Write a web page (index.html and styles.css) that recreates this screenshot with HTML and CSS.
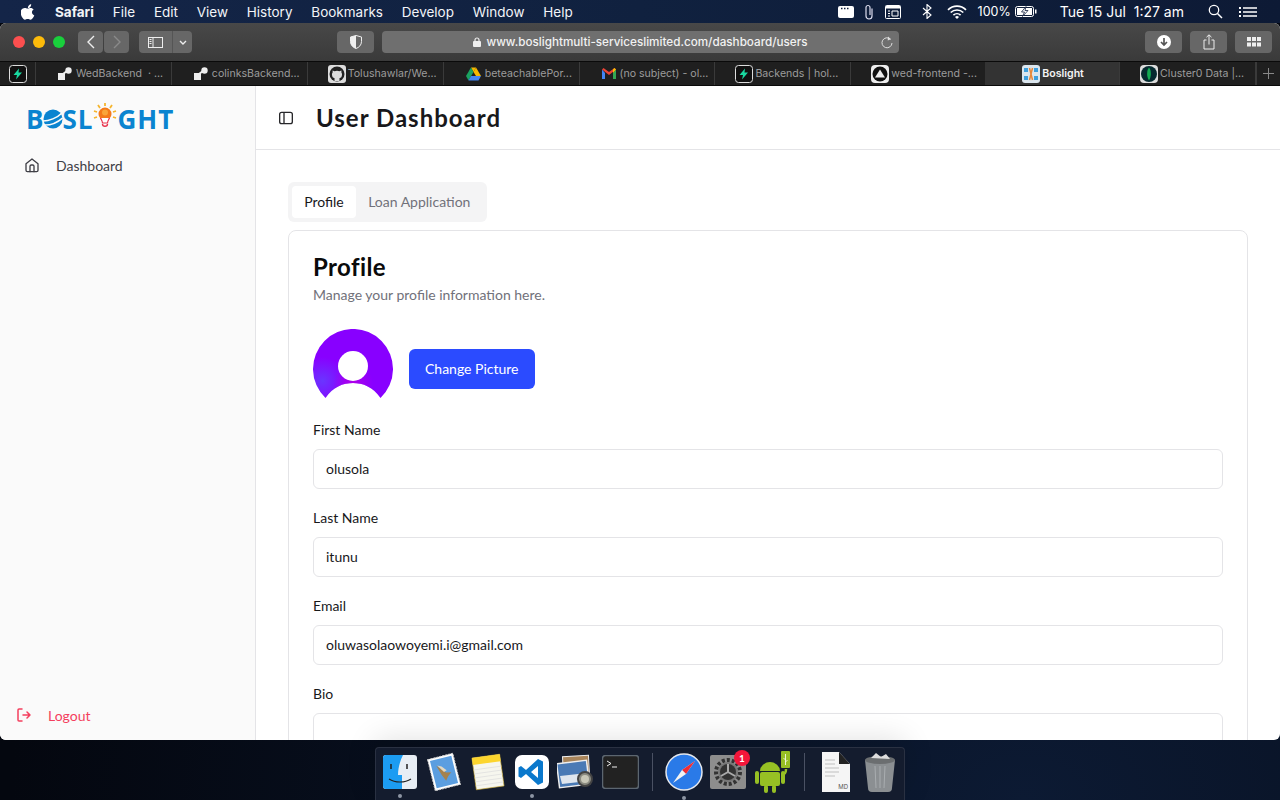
FILE: index.html
```html
<!DOCTYPE html>
<html>
<head>
  <title>Boslight</title>
  <link rel="stylesheet" href="styles.css">
</head>
<body>

  <div class="menubar">
    <div class="menu-left">
      <svg class="apple" width="14" height="16" viewBox="0 0 14 16"><path fill="#fff" d="M10.2 0.3c.1 1-.3 1.9-.9 2.6-.6.7-1.5 1.2-2.4 1.1-.1-.9.3-1.9.9-2.5C8.4.8 9.4.3 10.2.3zM13.3 11.4c-.4.9-.6 1.3-1.1 2-.7 1-1.6 2.3-2.8 2.3-1 0-1.3-.7-2.7-.7s-1.700.7-2.700.7c-1.200 0-2-1.100-2.700-2.100C-.6 10.800-.8 7.500.4 5.800c.8-1.200 2.100-1.900 3.300-1.900 1.200 0 2 .7 3 .7s1.600-.7 3-.7c1.100 0 2.200.6 3 1.600-2.600 1.500-2.200 5 .6 5.900z"/></svg>
      <span class="menu-item app-name">Safari</span>
      <span class="menu-item">File</span>
      <span class="menu-item">Edit</span>
      <span class="menu-item">View</span>
      <span class="menu-item">History</span>
      <span class="menu-item">Bookmarks</span>
      <span class="menu-item">Develop</span>
      <span class="menu-item">Window</span>
      <span class="menu-item">Help</span>
    </div>
    <div class="menu-right">
      <svg class="st-dots" width="16" height="12" viewBox="0 0 16 12"><rect width="16" height="12" rx="2" fill="#fff"/><path d="M3 2.500h1.500M6 2.500h1.500M9 2.500h1.500" stroke="#12203f" stroke-width="1.500"/></svg>
      <svg class="st-clip" width="10" height="16" viewBox="0 0 10 16"><path d="M8 4.500v7.500a3 3 0 0 1-6 0V3.500a2 2 0 0 1 4 0V11" fill="none" stroke="#dde" stroke-width="1.200"/></svg>
      <svg class="st-kb" width="16" height="14" viewBox="0 0 16 14"><rect x=".5" y=".5" width="15" height="13" rx="1" fill="none" stroke="#fff"/><rect x="1" y="1" width="14" height="2.500" fill="#fff"/><path d="M3 6h2M3 8.500h2M3 11h2M7 6h6v5H7z" stroke="#fff" fill="none"/></svg>
      <svg class="st-bt" width="10" height="15" viewBox="0 0 10 15"><path d="M1 4l8 7-4 3.500V.5L9 4l-8 7" fill="none" stroke="#fff" stroke-width="1.100"/></svg>
      <svg class="st-wifi" width="20" height="14" viewBox="0 0 20 14"><path d="M1 4.800a13 13 0 0 1 18 0M3.700 7.500a9.200 9.200 0 0 1 12.600 0M6.400 10.200a5.200 5.200 0 0 1 7.200 0" fill="none" stroke="#fff" stroke-width="1.700"/><path d="M10 14l-2-2a3 3 0 0 1 4 0z" fill="#fff"/></svg>
      <span class="st-pct">100%</span>
      <svg class="st-batt" width="22" height="11" viewBox="0 0 22 11"><rect x=".5" y=".5" width="18" height="10" rx="2" fill="none" stroke="#fff"/><rect x="20" y="3.500" width="1.500" height="4" fill="#fff"/><rect x="2" y="2" width="15" height="7" fill="#fff"/><path d="M11 0.500L6.500 6H9.500L7.500 10.500L13 4.500H10z" fill="#fff" stroke="#12203f" stroke-width=".8"/></svg>
      <span class="st-clock">Tue 15 Jul&nbsp; 1:27 am</span>
      <svg class="st-search" width="15" height="15" viewBox="0 0 15 15"><circle cx="6" cy="6" r="4.700" fill="none" stroke="#fff" stroke-width="1.300"/><path d="M9.500 9.500L14 14" stroke="#fff" stroke-width="1.500"/></svg>
      <svg class="st-list" width="18" height="10" viewBox="0 0 18 10"><path d="M4 1h14M4 5h14M4 9h14" stroke="#fff" stroke-width="1.400"/><path d="M0 1h2M0 5h2M0 9h2" stroke="#fff" stroke-width="1.800"/></svg>
    </div>
  </div>

  <div class="desktop">
    <div class="window">

      <div class="toolbar">
        <div class="lights">
          <span class="light red"></span>
          <span class="light yellow"></span>
          <span class="light green"></span>
        </div>
        <div class="nav-group">
          <div class="tool-btn nav-btn"><svg width="8" height="14" viewBox="0 0 8 14"><path d="M7 1L1 7l6 6" fill="none" stroke="#eee" stroke-width="1.400"/></svg></div>
          <div class="tool-btn nav-btn"><svg width="8" height="14" viewBox="0 0 8 14"><path d="M1 1l6 6-6 6" fill="none" stroke="#8a8a8a" stroke-width="1.400"/></svg></div>
        </div>
        <div class="tool-btn side-btn">
          <span class="side-main"><svg width="15" height="11" viewBox="0 0 15 11"><rect x=".5" y=".5" width="14" height="10" fill="none" stroke="#eee"/><path d="M5 .5v10M1.500 2.500h2M1.500 4.500h2M1.500 6.500h2" stroke="#eee"/></svg></span>
          <span class="side-arrow"><svg width="8" height="5" viewBox="0 0 8 5"><path d="M1 1l3 3 3-3" fill="none" stroke="#eee" stroke-width="1.400"/></svg></span>
        </div>
        <div class="tool-btn shield-btn"><svg width="12" height="14" viewBox="0 0 12 14"><path d="M6 .5l5.500 1.500v4.500c0 3.500-2.500 6-5.500 7-3-1-5.500-3.500-5.500-7V2z" fill="none" stroke="#eee"/><path d="M6 .5L.5 2v4.500c0 3.500 2.500 6 5.500 7z" fill="#eee"/></svg></div>
        <div class="address">
          <svg class="lock" width="8" height="10" viewBox="0 0 8 10"><rect y="4" width="8" height="6" rx="1" fill="#eee"/><path d="M2 4.500V3a2 2 0 0 1 4 0v1.500" fill="none" stroke="#eee" stroke-width="1.200"/></svg>
          <span>www.boslightmulti-serviceslimited.com/dashboard/users</span>
          <svg class="reload" width="12" height="13" viewBox="0 0 12 13"><path d="M9.500 3.200A5 5 0 1 0 11 7" fill="none" stroke="#ddd" stroke-width="1"/><path d="M7 0.500l3 2.700-3.300 1.300z" fill="#ddd"/></svg>
        </div>
        <div class="tool-right">
          <div class="tool-btn small-btn"><svg width="14" height="14" viewBox="0 0 14 14"><circle cx="7" cy="7" r="7" fill="#fff"/><path d="M7 3v6M4 7l3 3 3-3" fill="none" stroke="#555" stroke-width="1.700"/></svg></div>
          <div class="tool-btn small-btn"><svg width="12" height="16" viewBox="0 0 12 16"><path d="M3.500 6H1v9h10V6H8.500" fill="none" stroke="#eee"/><path d="M6 10.500V1M3.500 3.200L6 .8l2.500 2.400" fill="none" stroke="#eee"/></svg></div>
          <div class="tool-btn small-btn"><svg width="14" height="10" viewBox="0 0 14 10"><path fill="#eee" d="M0 0h4v4H0zM5 0h4v4H5zM10 0h4v4h-4zM0 5.500h4v4H0zM5 5.500h4v4H5zM10 5.500h4v4h-4z"/></svg></div>
        </div>
      </div>

      <div class="tabbar">
        <div class="tab pin">
          <svg class="fav" width="18" height="18" viewBox="0 0 18 18"><rect x=".5" y=".5" width="17" height="17" rx="3" fill="#111" stroke="#ddd"/><path d="M10 3.500L4.500 10H8l-1 4.500 6-7H9.500z" fill="#19d9a0"/></svg>
        </div>
        <div class="tab small-fav">
          <svg class="fav-node" width="14" height="14" viewBox="0 0 14 14"><rect y="6" width="7" height="7" fill="#eee"/><circle cx="10.500" cy="3.500" r="3.200" fill="#eee"/><path d="M5 7l4-3" stroke="#eee" stroke-width="2"/></svg>
          <span class="tab-text">WedBackend &nbsp;· ...</span>
        </div>
        <div class="tab small-fav">
          <svg class="fav-node" width="14" height="14" viewBox="0 0 14 14"><rect y="6" width="7" height="7" fill="#eee"/><circle cx="10.500" cy="3.500" r="3.200" fill="#eee"/><path d="M5 7l4-3" stroke="#eee" stroke-width="2"/></svg>
          <span class="tab-text">colinksBackend...</span>
        </div>
        <div class="tab">
          <svg class="fav" width="18" height="18" viewBox="0 0 18 18"><rect width="18" height="18" rx="3" fill="#ddd"/><circle cx="9" cy="9" r="7.500" fill="#222"/><path d="M6.500 16v-3c-1.500 0-2.500-1-2.500-3.500 0-1 .3-1.500.6-2V5.500l1.900.8a6 6 0 0 1 5 0l1.900-.8v2c.3.500.6 1 .6 2 0 2.500-1 3.500-2.500 3.500v3z" fill="#ddd"/></svg>
          <span class="tab-text">Tolushawlar/We...</span>
        </div>
        <div class="tab small-fav">
          <svg class="fav" width="15" height="14" viewBox="0 0 15 14"><path d="M5 .5h5L7.500 5 5 .5z" fill="#f5b800"/><path d="M5 .5L0 9l2.500 4.500L7.500 5z" fill="#1aa260"/><path d="M10 .5L15 9H10L7.500 5z" fill="#f5b800"/><path d="M2.500 13.500h10L15 9H5z" fill="#4285f4"/></svg>
          <span class="tab-text">beteachablePor...</span>
        </div>
        <div class="tab small-fav">
          <svg class="fav" width="14" height="11" viewBox="0 0 14 11"><path d="M0 1.500V11h3V5z" fill="#4285f4"/><path d="M14 1.500V11h-3V5z" fill="#34a853"/><path d="M0 1.500L7 7l7-5.500L12.500 0 7 4 1.500 0z" fill="#ea4335"/><path d="M11 5l3-3.500L12.500 0 11 1.200z" fill="#fbbc04"/></svg>
          <span class="tab-text">(no subject) - ol...</span>
        </div>
        <div class="tab">
          <svg class="fav" width="18" height="18" viewBox="0 0 18 18"><rect x=".5" y=".5" width="17" height="17" rx="3" fill="#111" stroke="#ddd"/><path d="M10 3.500L4.500 10H8l-1 4.500 6-7H9.500z" fill="#19d9a0"/></svg>
          <span class="tab-text">Backends | hol...</span>
        </div>
        <div class="tab">
          <svg class="fav" width="18" height="18" viewBox="0 0 18 18"><rect width="18" height="18" rx="4" fill="#eee"/><circle cx="9" cy="9" r="7.500" fill="#111"/><path d="M9 4.500l5 8H4z" fill="#eee"/></svg>
          <span class="tab-text">wed-frontend -...</span>
        </div>
        <div class="tab active">
          <svg class="fav" width="18" height="18" viewBox="0 0 18 18"><rect width="18" height="18" rx="3" fill="#dbe6ee"/><path d="M2 3h4v4H2zM12 3h4v4h-4zM2 11h4v4H2zM12 11h4v4h-4z" fill="#3f9fdd"/><path d="M7.500 3l3 12M10.500 3l-3 12" stroke="#e8883a" stroke-width="1.500"/></svg>
          <span class="tab-text">Boslight</span>
        </div>
        <div class="tab">
          <svg class="fav" width="18" height="18" viewBox="0 0 18 18"><rect width="18" height="18" rx="4" fill="#ddd"/><circle cx="9" cy="9" r="8" fill="#062a30"/><path d="M9 2.500c2.500 2.500 2.500 9.500 0 13-2.500-3.500-2.500-10.500 0-13z" fill="#13aa52"/></svg>
          <span class="tab-text">Cluster0 Data |...</span>
        </div>
        <div class="tab add-tab"><svg width="11" height="11" viewBox="0 0 11 11"><path d="M5.500 0v11M0 5.500h11" stroke="#888"/></svg></div>
      </div>

      <div class="app">
        <aside class="sidebar">
          <div class="logo">
            <span>B</span>
            <svg class="logo-globe" width="20" height="20" viewBox="0 0 20 20"><circle cx="10" cy="10" r="9.500" fill="#0a84d0"/><path d="M0 12c6 0 14-3 19-8M2 16c6 0 13-3 17.500-7" fill="none" stroke="#fafafa" stroke-width="1.600"/></svg>
            <span>SL</span>
            <svg class="logo-bulb" width="24" height="26" viewBox="0 0 24 26"><path d="M12 0v3M5 2l2 3M19 2l-2 3M1 8l3 1M23 8l-3 1M1 15l3-1M23 15l-3-1" stroke="#f5b52e" stroke-width="1.800"/><circle cx="12" cy="11" r="6.500" fill="#f47a1a"/><circle cx="12" cy="9.500" r="3" fill="#f9a53a"/><path d="M7.500 15c1 2 2 3 2 5h5c0-2 1-3 2-5" fill="#fff" stroke="#e8304a" stroke-width="1.200"/><path d="M9.500 21c0 3 5 3 5 0" fill="none" stroke="#e8304a" stroke-width="1.400"/></svg>
            <span>GHT</span>
          </div>
          <nav class="side-nav">
            <a class="side-link">
              <svg width="16" height="16" viewBox="0 0 24 24" fill="none" stroke="#3f3f46" stroke-width="2" stroke-linecap="round" stroke-linejoin="round"><path d="M3 10l9-7 9 7v10a2 2 0 0 1-2 2H5a2 2 0 0 1-2-2z"/><path d="M9 22v-8a2 2 0 0 1 2-2h2a2 2 0 0 1 2 2v8"/></svg>
              <span>Dashboard</span>
            </a>
          </nav>
          <a class="logout">
            <svg width="16" height="16" viewBox="0 0 16 16" fill="none" stroke="#f43f5e" stroke-width="1.500" stroke-linecap="round" stroke-linejoin="round"><path d="M6 2H3a1 1 0 0 0-1 1v10a1 1 0 0 0 1 1h3M7 8h7M11 5l3 3-3 3"/></svg>
            <span>Logout</span>
          </a>
        </aside>

        <main class="main">
          <header class="topbar">
            <svg width="16" height="16" viewBox="0 0 24 24" fill="none" stroke="#27272a" stroke-width="2"><rect x="2.500" y="3.500" width="19" height="17" rx="3"/><path d="M9 3.500v17"/></svg>
            <h1>User Dashboard</h1>
          </header>

          <div class="content">
            <div class="tabs-list">
              <button class="tab-trigger selected">Profile</button>
              <button class="tab-trigger">Loan Application</button>
            </div>

            <section class="card">
              <h2>Profile</h2>
              <p class="subtitle">Manage your profile information here.</p>

              <div class="avatar-row">
                <svg class="avatar" width="80" height="80" viewBox="0 0 80 80">
                  <defs>
                    <clipPath id="round"><path d="M12.500 69A40 40 0 1 1 67.500 69C60 58 50 54 40 54S20 58 12.500 69z"/></clipPath>
                    <radialGradient id="glow" cx="0.12" cy="0.65" r="0.3"><stop offset="0" stop-color="#6a35ff"/><stop offset="1" stop-color="#8800ff"/></radialGradient>
                    <radialGradient id="pink" cx="0.5" cy="0.68" r="0.25"><stop offset="0" stop-color="#b000e8"/><stop offset="1" stop-color="#b000e8" stop-opacity="0"/></radialGradient>
                  </defs>
                  <g clip-path="url(#round)">
                    <rect width="80" height="80" fill="url(#glow)"/>
                    <rect width="80" height="80" fill="url(#pink)"/>
                    <circle cx="40" cy="37" r="15" fill="#fff"/>
                  </g>
                </svg>
                <button class="change-btn">Change Picture</button>
              </div>

              <div class="field">
                <label>First Name</label>
                <input type="text" value="olusola">
              </div>
              <div class="field">
                <label>Last Name</label>
                <input type="text" value="itunu">
              </div>
              <div class="field">
                <label>Email</label>
                <input type="text" value="oluwasolaowoyemi.i@gmail.com">
              </div>
              <div class="field">
                <label>Bio</label>
                <textarea rows="4"></textarea>
              </div>
            </section>
          </div>
        </main>
      </div>
    </div>

    <div class="dock">
      <div class="dock-item running">
        <svg width="34" height="34" viewBox="0 0 34 34"><rect width="34" height="34" rx="3" fill="#e8eef5"/><path d="M0 3a3 3 0 0 1 3-3h17c-3 6-5 13-5 20h4v14H3a3 3 0 0 1-3-3z" fill="#1c9cf2"/><path d="M8 9v5M24 9v5" stroke="#222" stroke-width="1.500"/><path d="M6 24c6 4 16 4 22 0" fill="none" stroke="#222" stroke-width="1.200"/></svg>
      </div>
      <div class="dock-item">
        <svg width="34" height="40" viewBox="0 0 34 40"><g transform="rotate(-14 17 20)"><rect x="4" y="4" width="26" height="32" fill="#fff" stroke="#ccc" stroke-dasharray="2 1"/><rect x="6" y="6" width="22" height="28" fill="#5b9ee0"/><path d="M11 12l8 9 5 1-4 3-3 4-3-7z" fill="#a5824f"/><path d="M12 12l4 2 4 5-3 1z" fill="#e3d8c0"/></g></svg>
      </div>
      <div class="dock-item">
        <svg width="34" height="40" viewBox="0 0 34 40"><g transform="rotate(-8 17 20)"><rect x="3" y="4" width="28" height="32" fill="#f6f6ee" stroke="#c9a82a" stroke-width=".6"/><rect x="3" y="4" width="28" height="7" fill="#fcd52e"/><path d="M3 16h28M3 20h28M3 24h28M3 28h28M3 32h28" stroke="#ddd" stroke-width=".7"/></g></svg>
      </div>
      <div class="dock-item running">
        <svg width="34" height="34" viewBox="0 0 34 34"><rect width="34" height="34" rx="7" fill="#fff"/><path d="M23 4l5 2.500v21L23 30 11 19l-5 4-2.500-1.500v-9L6 11l5 4zM23 11l-7 6 7 6z" fill="#0a78cc"/></svg>
      </div>
      <div class="dock-item">
        <svg width="38" height="36" viewBox="0 0 38 36"><rect x="6" y="2" width="26" height="20" fill="#a8845a" stroke="#eee" transform="rotate(-3 19 12)"/><rect x="1" y="8" width="30" height="24" fill="#4a7ab5" stroke="#eee" stroke-width="1.500" transform="rotate(-7 16 20)"/><path d="M3 22l27-3 1 8-26 3z" fill="#dfe6ee"/><circle cx="28" cy="25" r="7" fill="#8b8b80" stroke="#444" stroke-width="2"/><circle cx="28" cy="25" r="4" fill="#c9c8b8"/></svg>
      </div>
      <div class="dock-item">
        <svg width="37" height="34" viewBox="0 0 37 34"><rect x=".5" y=".5" width="36" height="33" rx="3" fill="#222" stroke="#5c6670" stroke-width="1.500"/><path d="M5 6l4 2.500-4 2.500" fill="none" stroke="#eee" stroke-width="1"/><path d="M10 12h5" stroke="#eee"/></svg>
      </div>
      <span class="dock-sep"></span>
      <div class="dock-item running">
        <svg width="38" height="38" viewBox="0 0 38 38"><circle cx="19" cy="19" r="18" fill="#2a7ae8" stroke="#e5e8ee" stroke-width="1.500"/><path d="M30 8L17 17l4 4z" fill="#f2f2f2"/><path d="M30 8L21 21l-4-4z" fill="#ee2c36"/><path d="M8 30l9-13 4 4z" fill="#f2f2f2"/></svg>
      </div>
      <div class="dock-item">
        <svg width="36" height="34" viewBox="0 0 36 34"><rect width="36" height="34" rx="2" fill="#8d8d8d"/><circle cx="18" cy="17" r="12" fill="none" stroke="#333" stroke-width="4" stroke-dasharray="3 2"/><circle cx="18" cy="17" r="10" fill="#777"/><circle cx="18" cy="17" r="8" fill="#333"/><path d="M18 17V9M18 17l7 4M18 17l-7 4" stroke="#aaa" stroke-width="2"/></svg>
        <span class="badge">1</span>
      </div>
      <div class="dock-item">
        <svg width="36" height="42" viewBox="0 0 36 42"><path d="M6 20a10 9 0 0 1 20 0z" fill="#97c024"/><rect x="6" y="21" width="20" height="14" rx="2" fill="#97c024"/><rect x="1" y="20" width="4" height="13" rx="2" fill="#97c024"/><rect x="27" y="20" width="4" height="13" rx="2" fill="#97c024"/><rect x="10" y="34" width="4" height="8" rx="2" fill="#97c024"/><rect x="18" y="34" width="4" height="8" rx="2" fill="#97c024"/><path d="M27 24c4 0 5-2 5-6" fill="none" stroke="#97c024" stroke-width="2.500"/><rect x="27" y="0" width="9" height="17" rx="1" fill="#97c024"/><path d="M31.500 3v11M29.500 7l2 2M33.500 9l-2 2" stroke="#fff" stroke-width=".8"/></svg>
      </div>
      <span class="dock-sep"></span>
      <div class="dock-item">
        <svg width="28" height="40" viewBox="0 0 28 40"><path d="M0 0h17l11 12v28H0z" fill="#f5f5f5"/><path d="M17 0l11 12H17z" fill="#222"/><path d="M3 8h10M3 12h10M3 16h14M3 20h14M3 24h10" stroke="#aaa" stroke-width=".7"/></svg>
        <span class="md-label">MD</span>
      </div>
      <div class="dock-item">
        <svg width="32" height="40" viewBox="0 0 32 40"><path d="M1 8h30l-3 28a4 4 0 0 1-4 4H8a4 4 0 0 1-4-4z" fill="#8b8f92"/><ellipse cx="16" cy="8" rx="15" ry="4" fill="#6b6e70"/><path d="M7 6l5-5 5 4 5-3 4 5z" fill="#ddd"/><path d="M11 14l1 22M16 14v22M21 14l-1 22" stroke="#a9adb0"/></svg>
      </div>
    </div>
  </div>

</body>
</html>
```

FILE: styles.css
```css
* {
  box-sizing: border-box;
}

html, body {
  margin: 0;
  height: 800px;
  overflow: hidden;
}

body {
  display: flex;
  flex-direction: column;
  font-family: Lato, sans-serif;
  background: #060b16;
}

/* menu bar */
.menubar {
  height: 23px;
  flex: none;
  display: flex;
  justify-content: space-between;
  align-items: center;
  background: linear-gradient(90deg, #142548, #10213f 50%, #0d1a35);
  color: #fff;
  font-family: Inter, sans-serif;
  font-size: 14px;
  padding: 0 23px 0 21px;
}

.menu-left {
  display: flex;
  align-items: center;
}

.apple {
  margin-right: 20px;
}

.menu-item {
  margin-right: 18.8px;
  font-size: 13.5px;
  color: #f2f4f8;
}

.app-name {
  font-weight: 700;
}

.menu-right {
  display: flex;
  align-items: center;
  font-size: 13px;
}

.st-dots { margin-right: 10px; }
.st-clip { margin-right: 11px; }
.st-kb { margin-right: 21px; }
.st-bt { margin-right: 15px; }
.st-wifi { margin-right: 11px; }
.st-pct { margin-right: 4px; font-size: 12.5px; }
.st-batt { margin-right: 23px; }
.st-clock { margin-right: 24px; font-size: 14px; }
.st-search { margin-right: 16px; }

/* desktop */
.desktop {
  flex: 1;
  position: relative;
  background: radial-gradient(ellipse at 80% 100%, #0c1a33, #04070f 70%);
}

.window {
  height: 717px;
  display: flex;
  flex-direction: column;
  border-radius: 6px;
  overflow: hidden;
  background: #fff;
}

/* safari toolbar */
.toolbar {
  height: 38px;
  flex: none;
  display: flex;
  align-items: center;
  padding: 0 8px 0 13px;
  background: linear-gradient(#484848, #3a3a3a);
}

.lights {
  display: flex;
  gap: 8px;
  margin-right: 13px;
}

.light {
  width: 12px;
  height: 12px;
  border-radius: 50%;
}

.red { background: #fc4f4f; }
.yellow { background: #fdbb0a; }
.green { background: #19cf3c; }

.tool-btn {
  height: 22px;
  display: flex;
  align-items: center;
  justify-content: center;
  background: #676767;
  border-radius: 4px;
}

.nav-group {
  display: flex;
  gap: 1px;
  margin-right: 10px;
}

.nav-btn {
  width: 25px;
}

.side-btn {
  width: 53px;
  margin-right: 145px;
}

.side-main {
  width: 34px;
  height: 100%;
  display: flex;
  align-items: center;
  justify-content: center;
  border-right: 1px solid #555;
}

.side-arrow {
  flex: 1;
  display: flex;
  justify-content: center;
}

.shield-btn {
  width: 37px;
  margin-right: 8px;
}

.address {
  width: 517px;
  height: 22px;
  position: relative;
  display: flex;
  align-items: center;
  justify-content: center;
  gap: 5px;
  background: #6f6f6f;
  border-radius: 4px;
  color: #f2f2f2;
  font-family: Inter, sans-serif;
  font-size: 11.7px;
  font-weight: 500;
}

.reload {
  position: absolute;
  right: 6px;
  top: 5px;
}

.tool-right {
  display: flex;
  gap: 8px;
  margin-left: auto;
}

.small-btn {
  width: 37px;
}

/* tab bar */
.tabbar {
  height: 25px;
  flex: none;
  display: flex;
  background: #1f1f1f;
  border-top: 1px solid #0a0a0a;
  border-bottom: 1px solid #0a0a0a;
  font-family: Inter, sans-serif;
  font-size: 10.6px;
  color: #9c9c9c;
}

.tab {
  width: 136px;
  display: flex;
  align-items: center;
  gap: 2px;
  padding-left: 20px;
  border-right: 1px solid #3a3a3a;
  white-space: nowrap;
  overflow: hidden;
}

.tab.small-fav {
  padding-left: 22px;
  gap: 4px;
}

.tab.pin {
  width: 36px;
  padding-left: 9px;
}

.tab.active {
  background: #333;
  color: #f4f4f4;
  font-weight: 600;
  width: 135px;
  padding-left: 37px;
}

.tab:nth-child(8) {
  width: 134px;
  border-right: none;
}

.add-tab {
  width: 24px;
  padding-left: 0;
  justify-content: center;
  border-right: none;
  border-left: 1px solid #3a3a3a;
}

.fav, .fav-node {
  flex: none;
}

/* app */
.app {
  flex: 1;
  display: flex;
  min-height: 0;
}

.sidebar {
  width: 256px;
  flex: none;
  display: flex;
  flex-direction: column;
  background: #fafafa;
  border-right: 1px solid #e4e4e7;
  padding: 0 16px;
}

.logo {
  display: flex;
  align-items: center;
  height: 32px;
  margin: 17px 0 0 10px;
  color: #0a84d0;
  font-family: "Open Sans", sans-serif;
  font-size: 26px;
  font-weight: 700;
  letter-spacing: 1px;
}

.logo-globe {
  margin: 0 -1px;
}

.logo-bulb {
  margin: -6px 0 0;
}

.side-nav {
  flex: 1;
  margin-top: 14px;
}

.side-link, .logout {
  display: flex;
  align-items: center;
  gap: 16px;
  height: 32px;
  font-size: 14px;
  color: #3f3f46;
}

.side-link {
  padding-left: 8px;
}

.logout {
  color: #f43f5e;
  margin-bottom: 9px;
}

.main {
  flex: 1;
  min-width: 0;
}

.topbar {
  height: 64px;
  display: flex;
  align-items: center;
  gap: 22px;
  padding: 0 22px;
  border-bottom: 1px solid #e4e4e7;
}

.topbar h1 {
  margin: 0;
  font-size: 24px;
  font-weight: 700;
  letter-spacing: 1px;
  color: #18181b;
}

.content {
  padding: 32px;
}

.tabs-list {
  display: flex;
  width: fit-content;
  height: 40px;
  padding: 4px;
  background: #f4f4f5;
  border-radius: 6px;
}

.tab-trigger {
  border: none;
  background: none;
  padding: 0 12.2px 2px;
  font-family: Lato, sans-serif;
  font-size: 14px;
  color: #71717a;
  border-radius: 4px;
}

.tab-trigger.selected {
  background: #fff;
  color: #18181b;
}

.card {
  margin-top: 8px;
  padding: 24px;
  background: #fff;
  border: 1px solid #e4e4e7;
  border-radius: 8px;
}

.card h2 {
  margin: 0;
  font-size: 24px;
  line-height: 24px;
  font-weight: 700;
  letter-spacing: .4px;
  color: #0a0a0a;
}

.subtitle {
  margin: 6px 0 0;
  font-size: 14px;
  line-height: 20px;
  color: #71717a;
}

.avatar-row {
  display: flex;
  align-items: center;
  gap: 16px;
  margin-top: 24px;
}

.avatar {
  flex: none;
}

.change-btn {
  height: 40px;
  padding: 0 16px 2px;
  border: none;
  border-radius: 6px;
  background: #2b4bff;
  color: #fff;
  font-family: Lato, sans-serif;
  font-size: 14px;
}

.field {
  margin-top: 16px;
}

.avatar-row + .field {
  margin-top: 11px;
}

.field label {
  display: block;
  font-size: 14px;
  line-height: 20px;
  color: #18181b;
  margin-bottom: 9px;
}

.field input, .field textarea {
  display: block;
  width: 100%;
  height: 40px;
  padding: 0 12px 2px;
  border: 1px solid #e4e4e7;
  border-radius: 6px;
  background: #fff;
  font-family: Lato, sans-serif;
  font-size: 14px;
  color: #18181b;
}

.field textarea {
  height: 80px;
  resize: none;
}

.field + .field {
  margin-top: 19px;
}

/* dock */
.dock {
  position: absolute;
  left: 375px;
  top: 724px;
  width: 530px;
  height: 53px;
  display: flex;
  align-items: center;
  padding: 0 0 4px 2px;
  background: #141c2e;
  border: 1px solid #2a3142;
  border-bottom: none;
  border-radius: 4px 4px 0 0;
  box-shadow: 0 -8px 30px rgba(0,0,0,.12);
}

.dock-item {
  position: relative;
  flex: none;
  width: 44px;
  display: flex;
  justify-content: center;
  align-items: center;
}

.dock-item.running::after {
  content: "";
  position: absolute;
  left: 20px;
  bottom: -9px;
  width: 4px;
  height: 4px;
  border-radius: 50%;
  background: #8d95a3;
}

.dock-sep {
  flex: none;
  width: 1px;
  height: 38px;
  margin: 0 9px 0 10px;
  background: #4a5163;
}

.badge {
  position: absolute;
  top: -5px;
  right: 0;
  width: 16px;
  height: 16px;
  border-radius: 50%;
  background: #f3163a;
  color: #fff;
  font-size: 10px;
  font-weight: 700;
  text-align: center;
  line-height: 16px;
}

.md-label {
  position: absolute;
  right: 10px;
  bottom: 2px;
  font-family: Inter, sans-serif;
  font-size: 6px;
  color: #555;
}
```
